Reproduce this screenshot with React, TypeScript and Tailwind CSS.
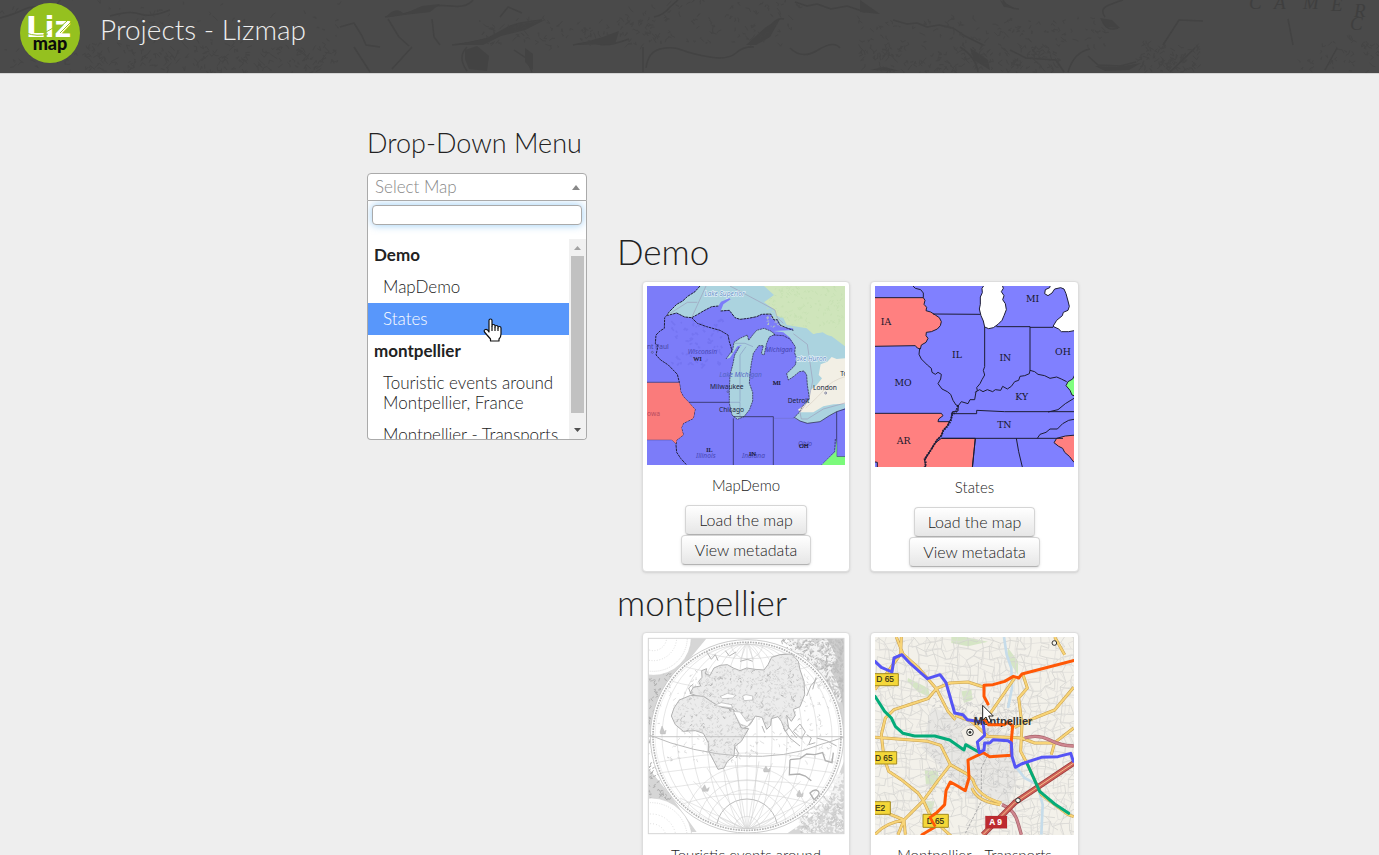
import React, { useState } from "react";

/* Deterministic generator used by the engraved and street textures. */
function seeded(seed: number) {
  let s = seed;
  return () => {
    s = (s * 16807) % 2147483647;
    return s / 2147483647;
  };
}

function strokes(seed: number, count: number, x: number, y: number, w: number, h: number, len: number) {
  const r = seeded(seed);
  let d = "";
  for (let i = 0; i < count; i++) {
    const px = x + r() * w;
    const py = y + r() * h;
    d += `M${px.toFixed(1)} ${py.toFixed(1)}l${((r() - 0.5) * len).toFixed(1)} ${((r() - 0.5) * len).toFixed(1)} ${((r() - 0.5) * len).toFixed(1)} ${((r() - 0.5) * len).toFixed(1)}`;
  }
  return d;
}

function streetMesh(seed: number) {
  const r = seeded(seed);
  const step = 24;
  const cols = 27;
  const pts: number[][][] = [];
  for (let j = 0; j < cols; j++) {
    pts.push([]);
    for (let i = 0; i < cols; i++) pts[j].push([10 + i * step + (r() - 0.5) * 20, 15 + j * step + (r() - 0.5) * 20]);
  }
  let d = "";
  for (let j = 0; j < cols - 1; j++)
    for (let i = 0; i < cols - 1; i++) {
      const [x, y] = pts[j][i];
      if (r() > 0.3) d += `M${x.toFixed(0)} ${y.toFixed(0)}L${pts[j][i + 1][0].toFixed(0)} ${pts[j][i + 1][1].toFixed(0)}`;
      if (r() > 0.3) d += `M${x.toFixed(0)} ${y.toFixed(0)}L${pts[j + 1][i][0].toFixed(0)} ${pts[j + 1][i][1].toFixed(0)}`;
    }
  return d;
}

const coastBand =
  "M0 18q15-4 25-9t18 2 14-6 16-5M110 16q20-6 30-2t30-4M385 17q22-3 36-8t30-3 22-6M500 17l8-10 14 6M654 17q10-2 16-10l8-7M795 2l12 4 10-2 14 5 16-3 18 6M1003 0q4 9 16 9M1105 17q-6-8 4-12t14-5";
const innerBand =
  "M340 27l14-4 8 13 4 9 14 2M388 19l11 18 10 9M432 19l2 18 6 8M452 45q20-2 34-6t20-10 36-9M573 45q18-4 26-1t30-5M750 45q14-8 20-18t14-8M893 20l14 4 10-1 10 4 12-2 14 3 12 8 18 9M1102 20q4 12 16 8M1163 45l16-25 24 1M1288 19l5 26";
const lowerBand =
  "M354 47l16 25M412 47l-20 22M467 47q-10 10 0 24M514 50l12 8 6 14M643 47v25M646 68q2-16 14-19t22 1 28 7 26-4 18-6M790 48q12 12 28 2t22-2M960 47q16 10 18 25M1010 50l16 8 30 2 8 12M1068 72q6-20 22-23M1088 56l10 9 22 1 16-4M1170 72l25-24M1325 70l12-22";

function HeaderTexture() {
  return (
    <svg className="absolute inset-0 h-full w-full" viewBox="0 0 1379 73" preserveAspectRatio="xMinYMin slice" aria-hidden="true">
      <g fill="none" stroke="#434343" strokeLinejoin="round" strokeWidth="1.5">
        <path d={coastBand} />
        <path d={innerBand} />
        <path d={lowerBand} />
      </g>
      <path fill="#434343" d="M386 17q10-12 18-3l18-8 18-2-10 8-26 3zM455 45l32-7 22-12 36-6-20 10-24 6-18 9zM575 45l28-8 16-6-4 13zM465 50l12-4 12 10-2 15-18-2-4-10zM525 48l8 6v16l-8-8zM746 45l20-18 14-8-10 18-14 8zM860 0l20 14-20-2zM1100 18l12 2 8 8-14-1zM1000 0l14 8-10-1zM1095 66l22 1 24-4-12 7-24 1zM970 48l18 12 2 10-16-10zM870 70l14-3 16 4z" />
      <g fill="none" stroke="#454545" strokeWidth="1">
        <path d={strokes(41, 150, 85, 46, 250, 26, 9)} />
        <path d={strokes(9, 120, 0, 0, 340, 72, 7)} />
        <path d={strokes(31, 100, 480, 20, 180, 26, 7)} />
        <path d={strokes(14, 100, 620, 0, 180, 44, 7)} />
        <path d={strokes(17, 180, 860, 46, 200, 26, 8)} />
        <path d={strokes(23, 110, 860, 18, 250, 28, 7)} />
        <path d={strokes(29, 80, 1140, 44, 60, 28, 8)} />
        <path d={strokes(51, 50, 1300, 40, 79, 32, 7)} />
      </g>
      <g fill="#3f3f3f" fontFamily="Liberation Serif, serif" fontSize="19" fontStyle="italic" fontWeight="400">
        <text x="1249" y="9">C</text>
        <text x="1274" y="9">A</text>
        <text x="1303" y="9">M</text>
        <text x="1331" y="11">E</text>
        <text x="1354" y="17">R</text>
        <text x="1350" y="30">C</text>
      </g>
    </svg>
  );
}

function Logo() {
  return (
    <svg className="size-[60px] shrink-0" viewBox="0 0 60 60" role="img" aria-label="Lizmap">
      <circle cx="30" cy="30" r="30" fill="#95c11f" />
      <text x="6" y="34" fontFamily="DejaVu Sans, sans-serif" fontWeight="700" fontSize="29" fill="#fff">
        Liz
      </text>
      <path d="M6 30q11 4 22 1M26 29l7-4M37 27l10-9M40 30l11-11" fill="none" stroke="#95c11f" strokeWidth="1" />
      <text x="30" y="47" textAnchor="middle" fontFamily="Lato, sans-serif" fontWeight="900" fontSize="18" fill="#0b0b0b">
        map
      </text>
    </svg>
  );
}

function GreatLakesMap() {
  return (
    <svg className="block w-full" viewBox="21 33 594 537" role="img" aria-label="MapDemo preview">
      <rect x="21" y="33" width="594" height="537" fill="#7c7cf9" />
      <path d={strokes(7, 60, 100, 130, 150, 150, 14)} stroke="#7474f1" strokeWidth="5" fill="none" />
      <path d="M180 33L165 50 143 64 128 78 110 88 88 110 80 122 110 114 134 126 155 128 170 120 190 108 215 95 235 93 243 80 268 70 272 73 250 88 242 108 268 106 285 128 300 133 325 130 350 125 365 118 392 117 402 135 412 134 420 150 438 158 460 160 460 180 500 205 505 240 620 300 620 33Z" fill="#abd3df" />
      <path d="M275 33L330 55 405 105 408 122 430 128 440 150 500 160 520 178 548 172 580 192 615 222 615 33Z" fill="#cfe5bb" />
      <path d={strokes(75, 170, 380, 36, 230, 120, 12)} stroke="#c4dfb0" strokeWidth="2" fill="none" />
      <path d="M520 178l28 24 12 40 20-12 35 24v-40l-40-30-40-10z" fill="#abd3df" />
      <path d="M275 33L372 33 402 60 372 82 402 104 400 108 330 66z" fill="#abd3df" />
      <path d="M400 168L430 172 450 188 466 215 464 234 470 250 466 270 440 296 445 315 460 305 478 290 492 288 500 300 502 330 508 370 486 396 478 412 462 428 480 438 502 445 540 440 568 422 590 410 615 400V250L560 185 460 165z" fill="#abd3df" />
      <path d="M615 250L590 252 575 246 562 260 542 268 536 300 546 310 530 330 512 345 508 378 488 394 474 404 480 412 520 412 550 394 580 388 615 386z" fill="#f2efe5" />
      <path d="M615 305q-40 12-58 34t-60 60" stroke="#e2dbd0" strokeWidth="3" fill="none" />
      <path d="M258 252L278 225 282 202 300 190 322 180 326 196 338 180 350 166 372 160 392 168 405 178 388 186 380 205 372 240 364 236 370 212 356 212 340 235 334 265 330 295 328 325 338 352 338 378 328 405 312 425 292 433 276 420 268 385 268 345 270 300 278 270 284 240 298 216 306 210 292 214 270 248z" fill="#abd3df" />
      <g fill="none" stroke="#20203c" strokeWidth="2" strokeLinejoin="round">
        <path strokeWidth="3" strokeDasharray="8 2" d="M180 33L165 50 143 64 128 78 110 88 88 110 80 122 74 128 73 160 60 168 48 180 46 206 54 212 48 240 62 255 85 270 112 298 118 322 122 350 130 365 146 382 165 403 160 430 130 445 124 458 130 480 110 495 108 510 110 532 122 550 140 570" />
        <path strokeWidth="3" strokeDasharray="8 2" d="M155 128L172 145 200 155 240 166 264 180 268 200 274 220 276 235 M80 122L110 114 134 126 155 128 170 120 190 108 215 95 235 93 M242 108L268 106 285 128 300 133 325 130 350 125 365 118 392 117 402 135 412 134 420 150 438 158 460 166" />
        <path strokeDasharray="6 2" d="M258 252L278 225 282 202 300 190 322 180 326 196 338 180 350 166 372 160 392 168 405 178 388 186 380 205 372 240 364 236 370 212 356 212 340 235 334 265 330 295 328 325 338 352 338 378 328 405 312 425 292 433 276 420 268 385 268 345 270 300 278 270 284 240 298 216" />
        <path d="M21 322H118M21 494H95L108 506M146 382H268M280 430V570M280 425H400M400 425V570M590 410V545H615M463 427L480 438 502 445 540 440 568 422 590 410 615 402" />
        <path strokeDasharray="7 2" d="M400 180L430 182 450 192 466 215 464 234 470 250 466 270 440 296 445 315 460 305 478 290 492 288 500 300 502 330 508 370 486 396 478 412 462 428 M586 492L584 530 555 560 545 570" />
        <path stroke="#6767a8" strokeWidth="1" d="M400 430H463M268 382H300V430M300 380V240L318 215M285 205h30l24 10" />
      </g>
      <path d="M21 323H118L122 350 130 365 146 382 165 403 160 430 130 445 124 458 130 480 110 495 108 506 95 494H21Z" fill="#fa7b7b" />
      <path d="M590 492L586 530 555 560 545 570H615V545H590Z" fill="#7bfa7b" />
      <path d="M270 33L405 105 412 128 430 145M460 176L502 208 518 318 506 375 480 412 484 432 502 432 550 402 615 384M80 122L142 82H172M155 128L198 33" stroke="#9888aa" strokeWidth="2" strokeOpacity=".7" fill="none" />
      <g fontFamily="Noto Sans, sans-serif" fontSize="20" fontWeight="400">
        <g fill="#5464c4" fontStyle="italic">
          <text x="193" y="62" fill="#5f8fc4" stroke="#f2f9ff" strokeWidth="3" paintOrder="stroke">Lake Superior</text>
          <text x="143" y="238" fill="#4a4ab6">Wisconsin</text>
          <text x="376" y="230" fill="#4444b0">Michigan</text>
          <text x="238" y="305">Lake Michigan</text>
          <text x="468" y="257" fill="#5f8fc4" stroke="#f2f9ff" strokeWidth="3" paintOrder="stroke">ake Huron</text>
          <text x="168" y="549" fill="#4848b4">Illinois</text>
          <text x="306" y="549" fill="#4848b4">Indiana</text>
          <text x="474" y="514" fill="#4848b4">Ohio</text>
        </g>
        <text x="21" y="223" fill="#4848a4">nt Paul</text>
        <text x="21" y="422" fill="#b84b60">owa</text>
        <g fill="#20263c">
          <text x="210" y="342">Milwaukee</text>
          <text x="237" y="412">Chicago</text>
          <text x="443" y="384">Detroit</text>
          <text x="519" y="345">London</text>
          <text x="601" y="302">To</text>
        </g>
      </g>
      <g fill="#111122" stroke="#111122" strokeWidth=".5" fontFamily="Liberation Serif, serif" fontSize="20" fontWeight="400">
        <text x="160" y="257">WI</text>
        <text x="398" y="329">MI</text>
        <text x="199" y="532">IL</text>
        <text x="327" y="542">IN</text>
        <text x="477" y="520">OH</text>
      </g>
      <g fill="none" stroke="#555b88" strokeWidth="2">
        <circle cx="264" cy="350" r="3" />
        <circle cx="557" cy="354" r="3" />
        <circle cx="37" cy="232" r="3" />
      </g>
    </svg>
  );
}

function StatesMap() {
  return (
    <svg className="block w-full" viewBox="21 33 597 543" role="img" aria-label="States preview">
      <rect x="21" y="33" width="597" height="543" fill="#8080ff" />
      <g stroke="#1d1d35" strokeWidth="3" strokeLinejoin="round">
        <path fill="#ff8080" d="M15 68L166 68 171 76 168 88 176 97 174 107 188 111 202 120 214 128 220 140 217 152 208 162 190 170 175 172 174 182 180 190 174 202 160 210 157 222 148 219 142 212 15 214Z" />
        <path fill="#ff8080" d="M15 415L220 415 225 422 212 432 210 440 244 440 238 452 226 466 220 482 208 494 200 506 188 526 178 540 170 552 174 566 170 582 28 582 28 562 15 560Z" />
        <path fill="#ff8080" d="M220 490H322L318 530 313 582H174L170 556 188 526 202 504Z" />
        <path fill="#ff8080" d="M624 480L592 483 566 490 558 503 572 514 584 520 590 532 604 544 618 562 624 562Z" />
        <path fill="#80ff80" d="M624 292L614 312 600 320 594 332 606 346 612 360 624 364Z" />
        <path fill="#fff" d="M350 28L342 40 343 53 337 66 337 88 334 102 339 122 346 138 350 156 362 161 376 158 390 148 402 136 408 122 415 104 412 86 404 74 408 62 400 50 406 40 402 28Z" />
        <path fill="#fff" d="M548 28L545 38 532 44 530 56 540 62 552 54 560 42 578 38 588 42 594 56 600 78 604 94 600 106 586 112 583 122 566 136 555 154 572 162 580 170 602 170 624 166 624 28Z" />
        <path fill="none" d="M135 33L142 40 158 44 166 54 166 68M195 117L337 118M385 155H486V287M486 157H555M350 156V275L346 286 350 300 342 314 336 326 326 338 328 346 322 352" />
        <path fill="none" d="M155 220L153 238 160 252 178 270 190 280 192 292 202 298 210 292 220 298 218 312 210 326 222 342 238 350 248 358 255 376 264 390 271 392 280 380 300 386 306 374 320 374 324 350 335 344 345 350 358 344 374 350 382 344 398 346 404 334 418 342 430 334 440 320 452 316 456 304 470 302 484 296 486 286 500 290 510 298 530 302 546 310 566 306 580 312 596 320" />
        <path fill="none" d="M271 390L270 408 254 410 250 416 326 416V406L410 410H618M254 410L250 430 244 440M220 490H585M322 490L313 576M445 490L452 530 463 576M540 411L570 404 592 386 618 370M508 490L516 478 534 472 546 462 568 462 584 446 602 436 618 433" />
        <path fill="none" strokeWidth="6" strokeDasharray="5 3" d="M270 392L264 410 252 420 248 438 238 454 226 466 220 482 208 494 200 506 188 526 178 540 170 552 174 566 170 576" />
      </g>
      <g fill="#17172c" fontFamily="DejaVu Serif, serif" fontSize="28" fontWeight="400" textAnchor="middle">
        <text x="54" y="150">IA</text>
        <text x="267" y="250">IL</text>
        <text x="412" y="257">IN</text>
        <text x="494" y="80">MI</text>
        <text x="585" y="239">OH</text>
        <text x="105" y="334">MO</text>
        <text x="461" y="376">KY</text>
        <text x="409" y="459">TN</text>
        <text x="107" y="506">AR</text>
      </g>
    </svg>
  );
}

const oldWorld =
  "M185 128L200 122 196 138 210 142 222 120 240 112 262 110 280 120 300 128 320 120 345 124 372 126 384 110 395 88 420 80 455 78 475 100 480 125 492 160 494 200 480 236 460 244 466 262 454 280 440 262 446 300 436 310 424 280 414 266 394 272 392 292 380 304 366 268 346 264 330 290 306 304 298 290 288 268 282 246 262 240 236 242 222 236 210 220 196 208 172 204 150 196 160 178 182 174 176 160 186 148Z";
const africa =
  "M152 202L190 205 222 226 246 238 280 244 290 270 304 300 326 302 304 340 284 356 282 384 262 400 252 420 234 424 226 408 206 370 206 346 190 316 166 308 130 310 106 290 94 264 102 240 118 216Z";
const australia = "M450 395L480 392 500 378 524 380 548 374 556 398 576 404 580 374M450 395L448 440 478 438 496 444 514 458M510 495q14-14 24-6t-12 26z";

function GlobeMap() {
  const meridians = [30, 75, 120, 165, 210, 255];
  return (
    <svg className="block w-full" viewBox="21 27 594 594" role="img" aria-label="Touristic events around Montpellier, France preview">
      <defs>
        <clipPath id="globe-disc">
          <circle cx="321" cy="325" r="278" />
        </clipPath>
        <clipPath id="globe-frame">
          <rect x="25" y="31" width="587" height="586" />
        </clipPath>
        <clipPath id="globe-land">
          <path d={oldWorld} />
          <path d={africa} />
        </clipPath>
      </defs>
      <rect x="21" y="27" width="594" height="594" fill="#fff" />
      <g clipPath="url(#globe-frame)" fill="none">
        <path d="M25 31H140L200 31 60 200 25 330ZM440 31H612V340L590 230 530 120ZM25 420L90 500 170 612H25ZM480 590L560 530 612 400V617H440Z" fill="#d6d6d6" />
        <path d={strokes(3, 430, 430, 31, 182, 190, 20)} stroke="#b7b7b7" strokeWidth="3" />
        <path d={strokes(69, 280, 450, 31, 162, 190, 20)} stroke="#f4f4f4" strokeWidth="4" />
        <path d="M560 31H612V260Q604 170 572 130L592 90Z" fill="#bcbcbc" fillOpacity=".7" />
        <path d={strokes(5, 330, 470, 440, 142, 180, 16)} stroke="#f4f4f4" strokeWidth="5" />
        <path d={strokes(8, 150, 480, 510, 132, 107, 18)} stroke="#c4c4c4" strokeWidth="2" />
        <path d={strokes(18, 170, 25, 130, 70, 380, 15)} stroke="#b0b0b0" strokeWidth="3" />
        <g fill="#fff" stroke="#cfcfcf" strokeWidth="2">
          <circle cx="40" cy="28" r="114" />
          <circle cx="40" cy="28" r="102" strokeDasharray="3 3" />
          <circle cx="40" cy="28" r="70" strokeDasharray="3 5" />
          <circle cx="40" cy="28" r="40" strokeDasharray="3 5" />
          <circle cx="34" cy="632" r="122" />
          <circle cx="34" cy="632" r="108" strokeDasharray="3 4" />
          <circle cx="34" cy="632" r="74" strokeDasharray="3 6" />
          <circle cx="34" cy="632" r="45" strokeDasharray="3 6" />
        </g>
        <circle cx="321" cy="325" r="290" fill="#fff" stroke="#cccccc" strokeWidth="3" />
        <g clipPath="url(#globe-disc)" stroke="#cdcdcd" strokeWidth="1.500">
          {meridians.map((rx) => (
            <ellipse key={rx} cx="321" cy="325" rx={rx} ry="278" />
          ))}
          <path d="M321 45V605M43 405Q321 345 599 405M55 435Q321 390 587 435M80 480Q321 435 562 480M120 530Q321 465 522 530M60 150Q321 230 582 150M100 105Q321 180 542 105M170 65Q321 120 472 65" />
          <circle cx="321" cy="605" r="40" />
          <circle cx="321" cy="605" r="92" strokeWidth="3" stroke="#bcbcbc" />
          <circle cx="321" cy="605" r="120" />
          <circle cx="321" cy="605" r="150" />
          <circle cx="321" cy="605" r="190" />
          <circle cx="321" cy="45" r="48" />
          <path d="M321 605L201 420M321 605L160 460M321 605L245 405M321 605L285 400M321 605L357 400M321 605L397 405M321 605L441 420M321 605L482 460M321 605L120 510M321 605L522 510M321 605L240 570M321 605L402 570M321 45l-40 46M321 45l-20 52M321 45l20 52M321 45l40 46" />
          <path d={strokes(12, 260, 60, 130, 520, 270, 14)} stroke="#c2c2c2" />
        </g>
        <path d={oldWorld} fill="#ececec" stroke="#b0b0b0" strokeWidth="3" />
        <path d={africa} fill="#ececec" stroke="#b0b0b0" strokeWidth="3" />
        <g clipPath="url(#globe-land)">
          <path d={strokes(42, 1900, 90, 75, 410, 350, 10)} stroke="#c8c8c8" strokeWidth="1.500" />
          <path d={strokes(60, 110, 110, 100, 360, 270, 16)} stroke="#acacac" strokeWidth="2" />
        </g>
        <g fill="#fff" stroke="#b4b4b4" strokeWidth="2">
          <path d="M308 204l10-4 20 4v12l-26 2zM222 232l26 4 30 4-4-10-30-6zM240 206l22-10 26 6-10 8-30 2zM280 250l20 38 22 8 18-24-20 8-20-28z" />
        </g>
        <path d={australia} stroke="#b0b0b0" strokeWidth="4" />
        <path d="M200 72l14 22 12-14 8 18M256 68l12 16 20-12M300 100l22-6 16 6M152 196l-6-16 14-12M500 204l12-30 20-24M528 148l-10 36M430 300l20 30 30 24M440 290l30 40M460 310l20-22 16 24-12 20zM500 320l14 10-8 20 20-6M530 330l30 8 30 16M284 356l12 20-8 14M366 294l8 20" stroke="#b5b5b5" strokeWidth="3" />
        <path d="M186 482l8-12 6 14 8-6-4 12h-16zM370 426l8-12 6 12 6-6-2 12h-16zM470 500l8-14 6 14 6-6-2 12h-16zM60 312l6-18 8 18 4-6-2 12H62z" fill="#c8c8c8" stroke="#b0b0b0" />
        <path d="M25 326H612" stroke="#bcbcbc" strokeWidth="4" strokeDasharray="4 2" />
        <path d="M25 320Q160 376 300 384T540 350L612 328" stroke="#bcbcbc" strokeWidth="3" />
        <circle cx="321" cy="325" r="282" stroke="#b4b4b4" strokeWidth="5" strokeDasharray="5 3" />
        <circle cx="321" cy="325" r="276" stroke="#d0d0d0" strokeWidth="1" />
      </g>
      <rect x="25" y="31" width="587" height="586" fill="none" stroke="#d5d5d5" strokeWidth="3" />
    </svg>
  );
}

const mainRoads =
  "M85 27L105 78 150 118 205 182 240 250 262 275M100 27L98 78 60 130 21 185M205 182L245 165 300 162 350 178 M205 182L180 212 130 228 78 245 52 270 40 320 48 390 62 430 100 455 150 495 166 518M21 328L100 334 180 340 218 352 232 380 247 410 300 440 318 460M247 410L208 460 166 518 108 576 90 620M166 518L190 570 250 625M21 556L60 556 108 576 112 620M21 620Q50 585 108 576M465 140L478 180 452 210 462 290 458 370 478 408M440 150L350 280M617 178L560 246 500 270 440 298M350 325L460 330 500 345 560 344 617 300M560 344L550 380M478 408L520 500 600 560 617 566M316 460Q330 505 400 525M312 480Q326 520 396 530M262 262L310 280 360 325M560 27L590 80";

function Montpellier() {
  return (
    <svg className="block w-full" viewBox="21 27 597 594" role="img" aria-label="Montpellier - Transports preview">
      <rect x="21" y="27" width="597" height="594" fill="#f3f1ea" />
      <path d="M250 27l40 0 70 14-60 14-50-10zM120 150l60 30 8 30-40-20-30-30zM170 425l40 5 2 40-38 0zM280 190l30-5 4 30-26 10zM420 60l30 40 0 40-34-50zM160 520l40 0-10 40z" fill="#d5e5c5" />
      <path d="M190 240l150 40 100 50 20 80-40 120-120-20-80-90-60-60z" fill="#e8e7e4" />
      <path d={streetMesh(77)} stroke="#cfcfcc" strokeWidth="2" fill="none" />
      <path d={streetMesh(33)} stroke="#dedddA" strokeWidth="2" fill="none" />
      <path d={strokes(19, 230, 180, 220, 270, 280, 22)} stroke="#c6c6c6" strokeWidth="2" fill="none" />
      <path d="M408 27L416 80 430 120 432 180 420 240M440 412L470 450 508 470 524 530 520 620" fill="none" stroke="#c6dcea" strokeWidth="8" />
      <path d="M278 310l20-18h45l10 40-30 24-30-10z" fill="#f3efe7" stroke="#c9c9c9" strokeWidth="2" />
      <path d="M360 300v80l-20 40v100l-30 60-20 40" fill="none" stroke="#aaa" strokeWidth="3" strokeDasharray="8 4" />
      <g fill="none" strokeLinejoin="round">
        <path d={mainRoads} stroke="#c8a04e" strokeWidth="9" />
        <path d={mainRoads} stroke="#f8d477" strokeWidth="6" />
        <path d="M470 330Q510 318 545 336T617 354M402 530Q440 545 450 585L460 620" stroke="#a8646b" strokeWidth="10" />
        <path d="M470 330Q510 318 545 336T617 354M402 530Q440 545 450 585L460 620" stroke="#cf8790" strokeWidth="6" />
        <path d="M617 405L440 524 345 620" stroke="#9e3c3a" strokeWidth="17" />
        <path d="M617 405L440 524 345 620" stroke="#cf6058" strokeWidth="12" />
        <path d="M617 405L440 524 345 620" stroke="#f3c18a" strokeWidth="3" />
      </g>
      <g fill="none" strokeWidth="9" strokeLinejoin="round" strokeLinecap="round">
        <path stroke="#04ab79" d="M21 205L50 250 70 270 82 295 105 316 140 324 200 324 245 336 288 366 293 350 332 372M478 408L515 490 560 528 602 556" />
        <path stroke="#ff5806" d="M618 97L462 138 452 150 436 145 410 160 375 170 348 172V205L360 228M335 283L350 276 362 290H410L420 282 434 294 430 338 430 382 365 386 346 374 300 396 303 450 292 488 270 475 247 462 234 488 230 530 204 556 186 568 202 596 162 620" />
        <path stroke="#5554f5" d="M21 100L40 118 72 132 78 90 102 80 125 105 178 152 216 140 234 164 260 255 285 260 298 275 345 283 350 322 328 342 334 374 348 366 350 345 365 345 376 335 420 338 430 345 432 385 442 418 460 408 520 388 570 386 608 376 616 400" />
      </g>
      <g fontFamily="Liberation Sans, sans-serif" fontSize="25" fontWeight="400" fill="#302b16" stroke="#302b16" strokeWidth=".5">
        <path d="M15 137h76v36H15zM15 371h71v37H15zM15 521h52v38H15zM165 559h76v39h-76z" fill="#f4d739" stroke="#a48b20" strokeWidth="3" />
        <text x="25" y="163">D 65</text>
        <text x="21" y="398">D 65</text>
        <text x="21" y="549">E2</text>
        <text x="176" y="587">D 65</text>
        <path d="M352 564h65v37h-65z" fill="#bd2a30" stroke="#8a2528" />
        <text x="364" y="591" fill="#fff" stroke="#fff" fontWeight="bold">A 9</text>
      </g>
      <path stroke="#ff5806" strokeWidth="8" fill="none" d="M202 596L186 568 204 556" />
      <text x="317" y="291" fontFamily="Liberation Sans, sans-serif" fontSize="33" fontWeight="bold" fill="#333">Montpellier</text>
      <path d="M350 276L362 290H410" stroke="#ff5806" strokeWidth="7" fill="none" />
      <g fill="#f5f5ee" stroke="#333" strokeWidth="3">
        <circle cx="306" cy="313" r="10" />
        <circle cx="306" cy="313" r="3" fill="#222" />
        <circle cx="559" cy="45" r="7" />
        <circle cx="450" cy="517" r="7" />
      </g>
      <path d="M344 232v44l10-9 8 17 7-4-7-16h14z" fill="#fff" stroke="#222" strokeWidth="3" />
    </svg>
  );
}

function HandCursor() {
  return (
    <svg className="pointer-events-none absolute top-[15px] left-[115px] h-6 w-[19px]" viewBox="0 0 19 24" aria-hidden="true">
      <path
        d="M6 14V2.500Q6 1 7.500 1T9 2.500V8Q9 6.500 10.500 6.500T12 8V9Q12 7.500 13.500 7.500T15 9v1Q15 8.500 16.500 8.500T18 10v6q0 3-2 5v2H7.500v-2L4 17 1.500 14Q.5 12 2.500 11.500T6 14Z"
        fill="#fff"
        stroke="#111"
        strokeWidth="1.200"
        strokeLinejoin="round"
      />
      <path d="M9 8v5M12 9v4M15 10v3" stroke="#111" strokeWidth="1.200" />
    </svg>
  );
}

type Project = { title: string; Preview: () => React.JSX.Element };

const groups: { name: string; projects: Project[] }[] = [
  {
    name: "Demo",
    projects: [
      { title: "MapDemo", Preview: GreatLakesMap },
      { title: "States", Preview: StatesMap },
    ],
  },
  {
    name: "montpellier",
    projects: [
      { title: "Touristic events around Montpellier, France", Preview: GlobeMap },
      { title: "Montpellier - Transports", Preview: Montpellier },
    ],
  },
];

const buttonClass =
  "h-[30px] rounded-[4px] border border-[#d5d5d5] border-b-[#b3b3b3] bg-linear-to-b from-white to-[#e6e6e6] px-[13px] text-[16px] leading-5 text-[#222] shadow-sm";

function ProjectCard({ title, Preview }: Project) {
  return (
    <li className="flex flex-col rounded-[4px] border border-[#ddd] bg-white p-1 text-[#222] shadow-sm">
      <Preview />
      <h3 className="my-2.5 text-center text-[15px] leading-5">{title}</h3>
      <div className="flex flex-col items-center">
        <button type="button" className={buttonClass}>
          Load the map
        </button>
        <button type="button" className={buttonClass}>
          View metadata
        </button>
      </div>
    </li>
  );
}

function MapPicker() {
  const [query, setQuery] = useState("");
  const [active, setActive] = useState("States");
  return (
    <div className="relative text-[17px] leading-5 text-[#222]">
      <button
        type="button"
        aria-expanded="true"
        aria-controls="map-list"
        className="flex h-7 w-full items-center justify-between rounded-t-[4px] border border-[#aaa] bg-white pr-1.5 pl-[7px] text-[#888]"
      >
        Select Map
        <svg className="h-[5px] w-2" viewBox="0 0 8 5" aria-hidden="true">
          <path d="M0 5L4 0 8 5z" fill="#888" />
        </svg>
      </button>
      <div className="absolute top-full left-0 z-10 w-full overflow-hidden rounded-b-[4px] border border-t-0 border-[#aaa] bg-white">
        <div className="px-1 pt-1 pb-3.5">
          <input
            type="text"
            aria-label="Search maps"
            value={query}
            onChange={(e) => setQuery(e.target.value)}
            className="block h-5 w-full rounded-[4px] border border-[#aaa] bg-white px-1 shadow-[0_0_8px_rgba(82,168,236,0.6)] outline-none"
          />
        </div>
        <div className="flex h-50">
          <ul id="map-list" role="listbox" aria-label="Maps" className="min-w-0 flex-1 overflow-hidden">
            {groups.map((group) => (
              <React.Fragment key={group.name}>
                <li className="px-1.5 py-1.5 font-bold">{group.name}</li>
                {group.projects.map(({ title }) => (
                  <li
                    key={title}
                    role="option"
                    aria-selected={title === active}
                    onMouseEnter={() => setActive(title)}
                    className={title === active ? "relative bg-[#5897fb] py-1.5 pr-px pl-[15px] text-white" : "relative py-1.5 pr-px pl-[15px]"}
                  >
                    {title}
                    {title === "States" && <HandCursor />}
                  </li>
                ))}
              </React.Fragment>
            ))}
          </ul>
          <div className="flex w-[17px] flex-col items-center bg-[#f1f1f1]" aria-hidden="true">
            <svg className="h-[17px] w-[17px]" viewBox="0 0 17 17">
              <path d="M5 11l3.500-4 3.500 4z" fill="#a3a3a3" />
            </svg>
            <div className="h-[157px] w-[13px] bg-[#c1c1c1]" />
            <svg className="mt-auto h-[17px] w-[17px]" viewBox="0 0 17 17">
              <path d="M5 6l3.500 4 3.500-4z" fill="#505050" />
            </svg>
          </div>
        </div>
      </div>
    </div>
  );
}

export default function App() {
  return (
    <div className="min-h-screen bg-[#eee] font-['Lato',sans-serif] font-light text-[#333]">
      <header className="relative overflow-hidden border-b border-[#d4d4d4] bg-[#4a4a4a]">
        <HeaderTexture />
        <div className="relative flex h-[73px] items-start gap-5 px-5 pt-[3px]">
          <Logo />
          <h1 className="pt-1.5 text-[28px] leading-10 text-[#eee]">Projects - Lizmap</h1>
        </div>
      </header>
      <main className="mx-auto flex max-w-[1171px] gap-[30px] pt-[49px] pr-[196px] pl-[263px]">
        <aside className="w-[220px] shrink-0">
          <h2 className="mb-2.5 text-[27px] leading-10 text-[#222]">Drop-Down Menu</h2>
          <MapPicker />
        </aside>
        <div className="min-w-0 flex-1 pt-[108px]">
          {groups.map((group) => (
            <section key={group.name} className="mb-2.5">
              <h2 className="mb-2.5 text-[35px] leading-10 text-[#222]">{group.name}</h2>
              <ul className="ml-[25px] grid grid-cols-[208fr_209fr] gap-5">
                {group.projects.map((project) => (
                  <ProjectCard key={project.title} {...project} />
                ))}
              </ul>
            </section>
          ))}
        </div>
      </main>
    </div>
  );
}
